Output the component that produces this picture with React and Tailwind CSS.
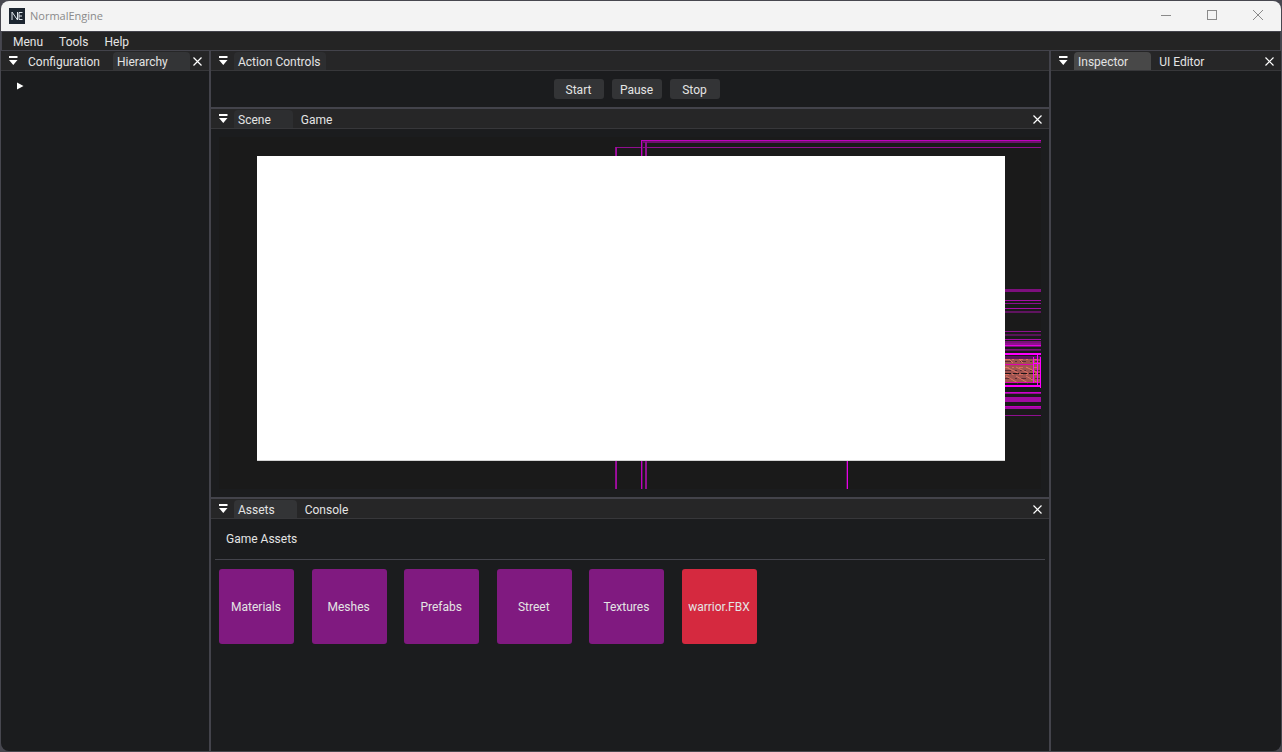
const TitleButton = ({ label, children }) => (
  <button type="button" aria-label={label} className="flex w-[46px] items-center justify-center">
    <svg width="12" height="12" viewBox="0 0 12 12" fill="none" stroke="#8a8a8a">{children}</svg>
  </button>
);

function Tabs({ tabs, closable = true, closeInset = "w-6 pl-2", menuLabel }) {
  return (
    <div className="flex h-5 shrink-0 items-stretch border-b border-[#37373a] bg-[#262627]">
      <button type="button" aria-label={menuLabel} className="flex w-[23px] shrink-0 items-center pl-2">
        <svg width="9" height="9" viewBox="0 0 9 9" fill="#fff">
          <path d="M0 0H8.500V2H0ZM0 4H8.500L4.250 9Z" />
        </svg>
      </button>
      <div role="tablist" className="flex gap-1 pt-px">
        {tabs.map((t) => (
          <button
            key={t.name}
            type="button"
            role="tab"
            aria-selected={!!t.bg}
            className={`rounded-t pl-1 leading-5 whitespace-nowrap ${t.pad ?? "pr-[22px]"} ${t.bg ?? ""}`}
          >
            {t.name}
          </button>
        ))}
      </div>
      {closable && (
        <button type="button" aria-label="Close" className={`ml-auto flex shrink-0 items-center pt-px ${closeInset}`}>
          <svg width="9" height="9" viewBox="0 0 9 9" stroke="#fff" strokeWidth="1.200">
            <path d="M.5 .5L8.5 8.5M8.5 .5L.5 8.5" />
          </svg>
        </button>
      )}
    </div>
  );
}

const edgeLines = [
  [152, 3, "#7d0f7d"], [163, 1, "#a80ca8"], [166, 1, "#8f0f8f"], [171, 1, "#a80ca8"], [174, 2, "#5f145f"],
  [194, 1, "#8f0f8f"], [197, 2, "#561556"], [202, 1, "#a80ca8"], [204, 2, "#7a107a"], [206, 2, "#8f0f8f"],
  [208, 1, "#e600e6"], [209, 1, "#7a107a"], [212, 1, "#7a107a"], [213, 1, "#561556"], [216, 2, "#ff00ff"], [219, 3, "#5c125c"],
  [224, 1, "#7a107a"], [225, 1, "#e600e6"], [248, 2, "#ff00ff"], [255, 1, "#d000d0"],
  [256, 1, "#8f0f8f"], [260, 5, "#a00aa0"], [269, 1, "#c000c0"], [270, 2, "#a00aa0"], [278, 1, "#8f0f8f"],
];

function SceneView() {
  return (
    <svg role="img" aria-label="Scene view" viewBox="0 0 822 352" preserveAspectRatio="none" className="block h-full w-full" shapeRendering="crispEdges">
      <rect width="822" height="352" fill="#1a1a1a" />
      <g fill="#a00aa0">
        <rect x="397" y="10" width="425" height="1" fill="#8f0f8f" />
        <rect x="397" y="10" width="1" height="342" />
        <rect x="422" y="3" width="400" height="1" fill="#c000c0" />
        <rect x="422" y="4" width="400" height="2" fill="#6d126d" />
        <rect x="422" y="3" width="1" height="349" fill="#c000c0" />
        <rect x="423" y="4" width="1" height="348" fill="#561556" />
        <rect x="426" y="5" width="2" height="347" fill="#8f0f8f" />
        <rect x="396" y="10" width="1" height="342" fill="#8f0f8f" />
        <rect x="628" y="300" width="1" height="52" fill="#e600e6" />
        <rect x="627" y="300" width="1" height="52" fill="#561556" />
      </g>
      {edgeLines.map(([y, h, fill]) => (
        <rect key={y} x="786" y={y} width="36" height={h} fill={fill} />
      ))}
      <rect x="786" y="222" width="36" height="24" fill="#a05450" />
      <g fill="none" shapeRendering="auto">
        <path d="M786 222.500H822M786 230.500H822M786 237.500H822" stroke="#dc6c5c" strokeDasharray="4 3 2 5" />
        <path d="M786 224.500H822M786 233.500H822M786 241.500H822" stroke="#5c2c34" strokeDasharray="6 4 2 3" />
        <path d="M786 236.500H822" stroke="#1f1518" strokeDasharray="6 2" />
        <path d="M787 239L799 246M797 239L809 246M807 239L819 246M787 230L799 236M797 230L809 236M807 230L819 236M790 222L794 226M800 222L804 226" stroke="#e07464" />
        <path d="M786 227.500H814M786 245.500H822" stroke="#e000b0" />
        <path d="M814.500 220V246M818.500 216V250M821.500 220V251M814 226.500H822" stroke="#ff00ff" />
      </g>
      <rect x="38" y="19" width="748" height="305" fill="#fff" />
      <rect x="38" y="323" width="748" height="1" fill="#d4d4d4" />
    </svg>
  );
}

const assets = [
  { name: "Materials" }, { name: "Meshes" }, { name: "Prefabs" }, { name: "Street" }, { name: "Textures" },
  { name: "warrior.FBX", file: true },
];

export default function App() {
  return (
    <div className="flex min-h-screen bg-[#47474f] p-px font-['Roboto',sans-serif] text-[12px] text-[#e4e4e4]">
      <div className="flex flex-1 flex-col overflow-hidden rounded-lg bg-[#43434b]">
        <header className="flex h-[30px] shrink-0 items-stretch bg-[#f3f3f3] pl-2">
          <div className="flex items-center gap-[5px] font-['Open_Sans',sans-serif] text-[11px] text-[#8a8a8a]">
            <svg width="16" height="16" viewBox="0 0 16 16" aria-hidden="true">
              <rect width="16" height="16" fill="#1c2530" />
              <path d="M3 12V4L8.500 12V4M13.500 4.500H10V11.500H13.500M10 8H13" fill="none" stroke="#dfe5ec" />
            </svg>
            <h1>NormalEngine</h1>
          </div>
          <div className="ml-auto flex">
            <TitleButton label="Minimize"><path d="M1 5.500H11" /></TitleButton>
            <TitleButton label="Maximize"><rect x="1.500" y=".5" width="9" height="9" /></TitleButton>
            <TitleButton label="Close window"><path d="M1 0L11 10M11 0L1 10" /></TitleButton>
          </div>
        </header>
        <nav className="mx-px my-px flex h-[18px] shrink-0 items-center gap-4 bg-[#242424] pt-0.5 pl-[11px]">
          <button type="button" className="leading-5">Menu</button>
          <button type="button" className="leading-5">Tools</button>
          <button type="button" className="leading-5">Help</button>
        </nav>
        <div className="flex flex-1 gap-[2px]">
          <aside className="flex w-[208px] shrink-0 flex-col bg-[#1b1c1e]">
            <Tabs
              menuLabel="Hierarchy dock menu"
              closeInset="w-4"
              tabs={[{ name: "Configuration", pad: "pr-[9px]" }, { name: "Hierarchy", bg: "bg-[#333436]" }]}
            />
            <button type="button" aria-label="Expand root" className="mt-[11px] ml-4 flex h-2 w-2 items-center">
              <svg width="7" height="8" viewBox="0 0 7 8" fill="#fff"><path d="M0 .5L6.500 4L0 7.500Z" /></svg>
            </button>
          </aside>
          <main className="flex min-w-0 flex-1 flex-col gap-[2px]">
            <section className="flex flex-col bg-[#1b1c1e]">
              <Tabs closable={false} menuLabel="Action dock menu" tabs={[{ name: "Action Controls", pad: "pr-[5px]", bg: "bg-[#2d2e30]" }]} />
              <div className="flex justify-center gap-2 py-2 pl-3.5">
                {["Start", "Pause", "Stop"].map((b) => (
                  <button key={b} type="button" className="h-5 w-[50px] rounded-[3px] bg-[#333436] pt-px pr-px leading-5">{b}</button>
                ))}
              </div>
            </section>
            <section className="flex flex-1 flex-col bg-[#1b1c1e]">
              <Tabs menuLabel="Scene dock menu" tabs={[{ name: "Scene", bg: "bg-[#2d2e30]" }, { name: "Game" }]} />
              <div className="min-h-0 flex-1 p-2">
                <SceneView />
              </div>
            </section>
            <section className="flex h-[252px] shrink-0 flex-col bg-[#1b1c1e]">
              <Tabs menuLabel="Assets dock menu" tabs={[{ name: "Assets", bg: "bg-[#333436]" }, { name: "Console" }]} />
              <h2 className="mx-1 border-b border-[#43434b] py-2.5 pl-[11px] leading-5">Game Assets</h2>
              <div className="flex max-w-[554px] flex-wrap justify-between px-2 pt-[9px]">
                {assets.map((a) => (
                  <button
                    key={a.name}
                    type="button"
                    className={`size-[75px] rounded-[3px] pr-px ${a.file ? "bg-[#d5293f]" : "bg-[#801a80]"}`}
                  >
                    {a.name}
                  </button>
                ))}
              </div>
            </section>
          </main>
          <aside className="flex w-[230px] shrink-0 flex-col bg-[#1b1c1e]">
            <Tabs menuLabel="Inspector dock menu" tabs={[{ name: "Inspector", pad: "pr-[23px]", bg: "bg-[#484848]" }, { name: "UI Editor" }]} />
          </aside>
        </div>
      </div>
    </div>
  );
}
